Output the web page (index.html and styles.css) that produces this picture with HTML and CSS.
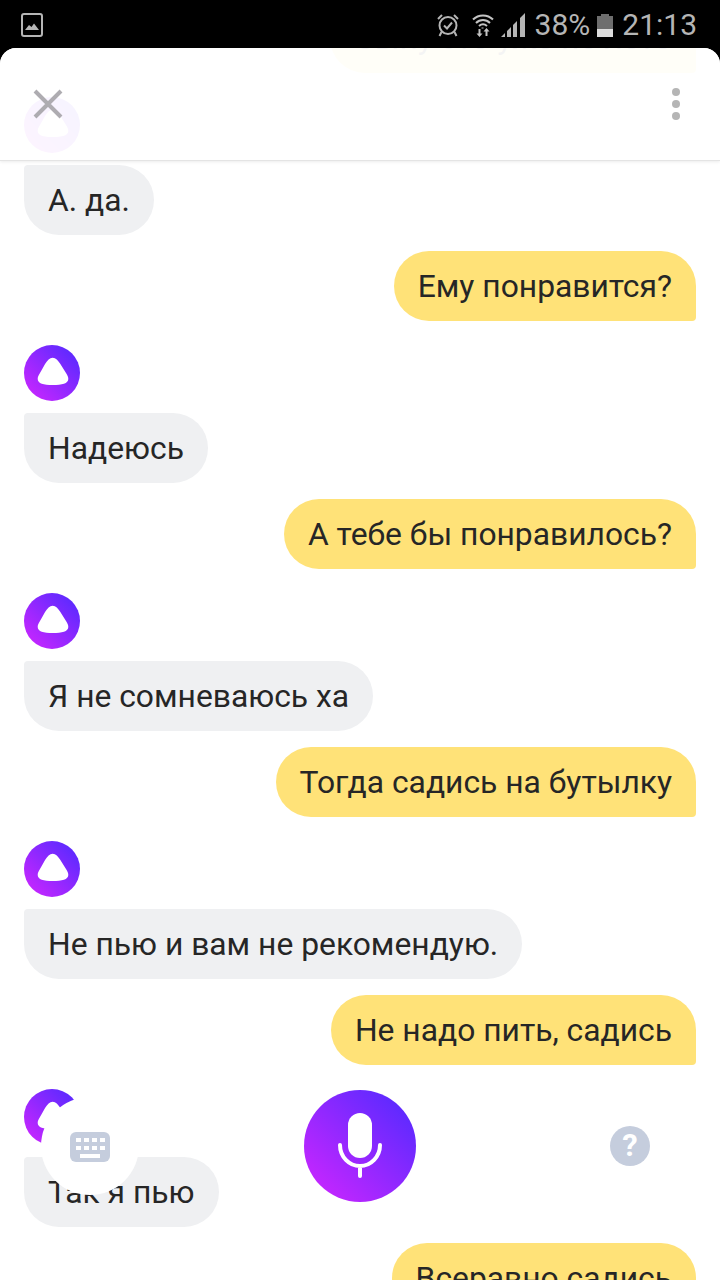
FILE: index.html
```html
<!DOCTYPE html>
<html lang="ru">
<head>
    <meta charset="UTF-8">
    <meta name="viewport" content="width=device-width, initial-scale=1.0">
    <title>Алиса</title>
    <link rel="stylesheet" href="styles.css">
</head>
<body>
    <svg class="defs" width="0" height="0" aria-hidden="true">
        <defs>
            <linearGradient id="violet" x1="1" y1="0" x2="0" y2="1">
                <stop offset="0.1" stop-color="#5a2aff"/>
                <stop offset="0.9" stop-color="#c626ff"/>
            </linearGradient>
            <symbol id="alice" viewBox="0 0 56 56">
                <circle cx="28" cy="28" r="28" fill="url(#violet)"/>
                <path fill="#fff" d="M28.7 12.7C31.8 12.7 34 15.2 36.2 18.8L42 28C43.6 30.5 44.3 32 44.3 34C44.3 38.5 38 40 28.7 40C19.5 40 13.7 38.5 13.7 34C13.7 32 14.4 30.5 16 28L21.2 18.8C23.4 15.2 25.6 12.7 28.7 12.7Z"/>
            </symbol>
        </defs>
    </svg>

    <div class="status-bar">
        <svg class="status-pic" viewBox="0 0 22 24" width="22" height="24">
            <rect x="1" y="1" width="20" height="22" rx="2" fill="none" stroke="#b5b5b5" stroke-width="2"/>
            <path fill="#b5b5b5" d="M4 17L8 12L10.5 14L13 10.5L18 17Z"/>
        </svg>
        <div class="status-right">
            <svg class="status-icon alarm" viewBox="0 0 22 24" width="22" height="24" fill="none" stroke="#b5b5b5">
                <circle cx="11" cy="12.5" r="8.5" stroke-width="2"/>
                <path stroke-width="2" d="M7 12.5L10 15.5L15 9.5"/>
                <path stroke-width="2" d="M1 6L5 2M21 6L17 2M4.5 19L2.5 23M17.5 19L19.5 23"/>
            </svg>
            <svg class="status-icon wifi" viewBox="0 0 22 24" width="22" height="24" fill="none" stroke="#c4c4c4" stroke-width="2">
                <path d="M1 6.5C6.5 1 15.5 1 21 6.5M4 10C8 6 14 6 18 10M7 13C9.5 10.8 12.5 10.8 15 13"/>
                <path fill="#c4c4c4" stroke="none" d="M9.5 14.5H11.5V15.5H9.5ZM6.5 16H8.5V20.5H10.5L7.5 24L4.5 20.5H6.5ZM14.5 15L17.5 18.5H15.5V23H13.5V18.5H11.5Z"/>
            </svg>
            <svg class="status-icon signal" viewBox="0 0 24 24" width="24" height="24" fill="#b5b5b5">
                <path d="M0 24L4 20V24ZM6 24V18L10 14V24ZM12 24V12L16 8V24ZM19 24V5L24 0V24Z"/>
            </svg>
            <span class="status-text percent">38%</span>
            <div class="battery">
                <div class="battery-cap"></div>
                <div class="battery-empty"></div>
                <div class="battery-full"></div>
            </div>
            <span class="status-text time">21:13</span>
        </div>
    </div>

    <div class="sheet">
        <div class="chat">
            <div class="bubble user">Сыну это уже не лето</div>

            <svg class="avatar"><use href="#alice"/></svg>
            <div class="bubble bot">А. да.</div>
            <div class="bubble user">Ему понравится?</div>

            <svg class="avatar"><use href="#alice"/></svg>
            <div class="bubble bot">Надеюсь</div>
            <div class="bubble user">А тебе бы понравилось?</div>

            <svg class="avatar"><use href="#alice"/></svg>
            <div class="bubble bot">Я не сомневаюсь ха</div>
            <div class="bubble user">Тогда садись на бутылку</div>

            <svg class="avatar"><use href="#alice"/></svg>
            <div class="bubble bot">Не пью и вам не рекомендую.</div>
            <div class="bubble user">Не надо пить, садись</div>

            <svg class="avatar"><use href="#alice"/></svg>
            <div class="bubble bot">Так я пью</div>
            <div class="bubble user">Всеравно садись</div>
        </div>

        <div class="sheet-header">
            <svg class="close" viewBox="0 0 30 30" width="30" height="30">
                <path d="M2 2L28 28M28 2L2 28" stroke="#aeacb1" stroke-width="4" fill="none"/>
            </svg>
            <div class="more">
                <span></span>
                <span></span>
                <span></span>
            </div>
        </div>
    </div>

    <div class="controls">
        <button class="control keyboard">
            <svg viewBox="0 0 40 30" width="40" height="30">
                <rect width="40" height="30" rx="6" fill="#c5cddd"/>
                <path fill="#fff" d="M6 6h5v4H6zM14 6h5v4h-5zM22 6h5v4h-5zM30 6h5v4h-5zM6 14h5v4H6zM14 14h5v4h-5zM22 14h5v4h-5zM30 14h5v4h-5zM10 22h20v4H10z"/>
            </svg>
        </button>
        <button class="mic">
            <svg viewBox="0 0 112 112" width="112" height="112">
                <circle cx="56" cy="56" r="56" fill="url(#violet)"/>
                <rect x="44" y="23" width="24" height="45" rx="12" fill="#fff"/>
                <path d="M36 55A20 21 0 0 0 76 55M56 76V86" fill="none" stroke="#fff" stroke-width="4" stroke-linecap="round"/>
            </svg>
        </button>
        <button class="control help"><span class="help-mark">?</span></button>
    </div>
</body>
</html>
```

FILE: styles.css
```css
* {
    box-sizing: border-box;
}
html, body {
    margin: 0;
    height: 1280px;
    overflow: hidden;
}
body {
    position: relative;
    display: flex;
    flex-direction: column;
    background-color: #000;
    font-family: Roboto, "Noto Sans", sans-serif;
    color: #262626;
}
.defs {
    position: absolute;
}

/* status bar */
.status-bar {
    flex: none;
    height: 48px;
    display: flex;
    align-items: center;
    justify-content: space-between;
    padding: 2px 23px 0 21px;
}
.status-right {
    display: flex;
    align-items: center;
}
.status-icon {
    display: block;
}
.alarm {
    margin-right: 13px;
}
.wifi {
    margin-right: 7px;
}
.signal {
    margin-right: 10px;
}
.status-text {
    font-size: 30px;
    line-height: 36px;
    color: #b5b5b5;
}
.percent {
    margin-right: 7px;
}
.time {
    margin-left: 9px;
}
.battery {
    width: 16px;
    height: 23px;
    display: flex;
    flex-direction: column;
}
.battery-cap {
    width: 8px;
    height: 2px;
    margin: 0 auto;
    background-color: #6e6e6e;
}
.battery-empty {
    height: 13px;
    background-color: #6e6e6e;
}
.battery-full {
    flex: 1;
    background-color: #dcdcdc;
}

/* sheet with messages */
.sheet {
    position: relative;
    flex: 1;
    min-height: 0;
    background-color: #fff;
    border-radius: 16px 16px 0 0;
    overflow: hidden;
}
.chat {
    display: flex;
    flex-direction: column;
    align-items: flex-start;
    margin-top: -45px;
    padding: 0 24px;
}
.avatar {
    display: block;
    width: 56px;
    height: 56px;
    margin-top: 24px;
}
.bubble {
    height: 70px;
    padding: 0 24px;
    font-size: 31.8px;
    line-height: 70px;
    white-space: nowrap;
    border-radius: 35px;
}
.bot {
    margin-top: 12px;
    background-color: #eff0f2;
    border-top-left-radius: 4px;
}
.user {
    align-self: flex-end;
    margin-top: 16px;
    background-color: #ffe278;
    border-bottom-right-radius: 4px;
}
.chat .user:first-child {
    margin-top: 0;
}

.sheet-header {
    position: absolute;
    top: 0;
    left: 0;
    right: 0;
    height: 113px;
    display: flex;
    align-items: flex-start;
    justify-content: space-between;
    padding: 41px 40px 0 33px;
    background-color: rgba(255, 255, 255, 0.95);
    border-bottom: 1px solid #e4e4e4;
    box-shadow: 0 1px 3px rgba(0, 0, 0, 0.08);
}
.close {
    display: block;
}
.more {
    display: flex;
    flex-direction: column;
    gap: 4px;
    margin-top: -1px;
}
.more span {
    width: 8px;
    height: 8px;
    border-radius: 50%;
    background-color: #b5b5b5;
}

/* bottom controls */
.controls {
    position: absolute;
    left: 0;
    right: 0;
    bottom: 78px;
    display: flex;
    align-items: center;
    justify-content: space-between;
    padding: 0 41px;
}
.controls button {
    display: flex;
    align-items: center;
    justify-content: center;
    padding: 0;
    border: none;
    background: none;
}
.controls .control {
    width: 98px;
    height: 98px;
    border-radius: 50%;
}
.controls .keyboard {
    padding-top: 2px;
    background-color: #fff;
}
.mic {
    width: 112px;
    height: 112px;
}
.help-mark {
    width: 40px;
    height: 40px;
    border-radius: 50%;
    background-color: #c5cddd;
    color: #fff;
    font-family: Roboto, sans-serif;
    font-size: 31px;
    font-weight: 700;
    line-height: 40px;
    text-align: center;
}
```
